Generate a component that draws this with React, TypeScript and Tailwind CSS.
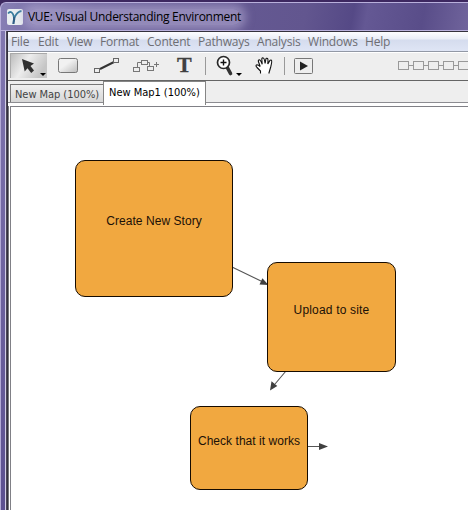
import React from "react";

const menus = [
  { label: "File", cls: "w-[27px]" },
  { label: "Edit", cls: "w-[29px]" },
  { label: "View", cls: "w-[33px]" },
  { label: "Format", cls: "w-[47px]" },
  { label: "Content", cls: "w-[51px]" },
  { label: "Pathways", cls: "w-[59px]" },
  { label: "Analysis", cls: "w-[51px]" },
  { label: "Windows", cls: "w-[57px]" },
  { label: "Help", cls: "w-[30px]" },
];

function TitleBar() {
  return (
    <header className="h-[31px] shrink-0 border-t-2 border-[#3d2860] bg-[#3d2860]">
      <div className="flex h-[29px] items-center overflow-hidden rounded-tl-md border-l border-t border-b border-[#b9b0dc] bg-[linear-gradient(100deg,#8880b5_0%,#695e99_20%,#62568f_65%,#554986_75%,#645894_78%,#594d89_90%,#70649c_100%)] pl-[6px]">
        <svg width="16" height="16" viewBox="0 0 16 16" className="shrink-0">
          <rect width="16" height="16" rx="2" fill="#e9eef1" />
          <path d="M1 4.5C3.5 1.5 6 3 7.2 9C9 5 10.5 2.5 14.5 2" fill="none" stroke="#397c9e" strokeWidth="1.8" />
          <path d="M7.2 8C7.5 11 6.5 12.5 6.4 15" fill="none" stroke="#315f87" strokeWidth="2.2" />
        </svg>
        <span className="ml-[5px] whitespace-nowrap rounded-full bg-[#b1a9d0]/60 font-['Open_Sans',sans-serif] text-[12px] leading-4 tracking-[-0.28px] text-black shadow-[0_0_8px_5px_rgba(177,169,208,0.6)]">
          VUE: Visual Understanding Environment
        </span>
      </div>
    </header>
  );
}

function MenuBar() {
  return (
    <nav className="flex h-5 shrink-0 items-center border-b border-[#9298a5] bg-[linear-gradient(#fdfdff_0px,#e9edf7_7px,#d5dcee_8px,#dfe5f5_19px)] pl-[3px] font-['Open_Sans',sans-serif] text-[12px] leading-4 tracking-[-0.2px] text-[#6e6e73]">
      {menus.map((m) => (
        <span key={m.label} className={"shrink-0 whitespace-nowrap " + m.cls}>{m.label}</span>
      ))}
    </nav>
  );
}

function Toolbar() {
  return (
    <div className="h-[29px] shrink-0 border-b border-[#656565] border-t border-t-white bg-[#eeeeee]">
      <svg width="460" height="27" viewBox="8 53 460 27" className="block">
        <defs>
          <linearGradient id="selected" x1="0" x2="1" y2="0.4">
            <stop stopColor="#b8b8b8" /><stop offset=".5" stopColor="#ededed" /><stop offset="1" stopColor="#c5c5c5" />
          </linearGradient>
          <linearGradient id="shape" x2="1" y2="1">
            <stop offset=".4" stopColor="#f1f1f1" /><stop offset="1" stopColor="#bcbcbc" />
          </linearGradient>
        </defs>
        <rect x="10" y="53" width="37" height="25" fill="url(#selected)" />
        <path d="M10.5 78V53.5H47" fill="none" stroke="#a9a9a9" />
        <path d="M22 59L34 63.5L30.5 66L34 70.5L31.2 73L27.5 68.2L24.7 71.5Z" fill="#303030" />
        <path d="M40 73H46L43 76Z" fill="#000" />
        <rect x="58.5" y="58.5" width="19" height="14" rx="2" fill="url(#shape)" stroke="#777" />
        <path d="M100 69L114 62" stroke="#333" strokeWidth="2" />
        <g fill="#eee" stroke="#666">
          <rect x="94.5" y="68.5" width="5" height="4" /><rect x="113.5" y="58.5" width="5" height="4" />
        </g>
        <g fill="none" stroke="#777">
          <rect x="133.5" y="67.5" width="6" height="4" /><rect x="141.5" y="60.5" width="6" height="4" /><rect x="147.5" y="66.5" width="6" height="4" />
          <path d="M137.5 67V62.5H141M147 62.5H149.5V66M154 64.5H159M156.5 62V67" />
        </g>
        <text x="177" y="72" fontFamily="Liberation Serif, serif" fontSize="22" fontWeight="700" fill="#404040" stroke="#404040" strokeWidth=".3">T</text>
        <path d="M205.5 57V75M284.5 57V75" stroke="#999" />
        <path d="M227 67L230.5 73.5" stroke="#333" strokeWidth="3.6" strokeLinecap="round" />
        <circle cx="223.5" cy="62.5" r="6" fill="#fff" stroke="#292929" strokeWidth="1.7" />
        <path d="M220.5 62.5H226.5M223.5 59.5V65.5" stroke="#111" strokeWidth="1.4" />
        <path d="M236 73H242L239 76Z" fill="#000" />
        <path d="M260.5 73.5V71L257 67.5Q255 65.2 257 64.8Q258.4 64.8 260.2 66.5L258.4 61.5Q258 59.7 259.4 59.7Q260.4 59.8 262.2 64.2L261.8 59Q262 57.5 263.3 58Q264.4 58.3 265.1 63.5L265.9 59Q266.4 57.8 267.6 58.5Q268.2 59 267.8 64L269.8 60.6Q270.6 59.6 271.5 60.3Q272.2 61 270.7 67L268.8 73.5" fill="white" stroke="#111" strokeWidth="1.1" />
        <rect x="294.5" y="58.5" width="18" height="15" rx="1" fill="#eee" stroke="#777" />
        <path d="M300 61.5L308 66L300 70.5Z" fill="#222" />
        <g fill="none" stroke="#999">
          {[398.5, 413.5, 428.5, 443.5, 458.5].map((x) => (
            <g key={x}><rect x={x} y="61.5" width="10" height="8" /><path d={`M${x + 10} 65.5h5`} /></g>
          ))}
        </g>
      </svg>
    </div>
  );
}

function Tabs() {
  return (
    <div className="flex h-[25px] shrink-0 border-b-[3px] border-white bg-[#eeeeee] font-['DejaVu_Sans_Condensed','DejaVu_Sans',sans-serif] text-[11px] leading-[18px]">
      <div className="flex w-[95px] shrink-0 items-end border-b border-[#8c8c91] pl-[2px]">
        <div className="h-[18px] w-[93px] whitespace-nowrap border-l border-t border-[#777] bg-linear-to-b from-[#f0f0f0] to-[#d7d7d7] pl-1 pt-px font-stretch-condensed tracking-[-0.05px] text-[#444]">New Map (100%)</div>
      </div>
      <div className="h-[24px] w-[103px] shrink-0 whitespace-nowrap border-l border-r border-t border-[#858585] bg-white pl-[5px] pt-[2px] font-stretch-condensed tracking-[-0.02px] text-black">New Map1 (100%)</div>
      <div className="flex-1 border-b border-[#8c8c91]" />
    </div>
  );
}

function Node({ label, place }: { label: string; place: string }) {
  return (
    <div className={"absolute flex justify-center rounded-[10px] border border-[#160b00] bg-[#f1a840] font-['Liberation_Sans',sans-serif] text-[12px] leading-4 text-[#1b1007] " + place}>
      <span className="whitespace-nowrap">{label}</span>
    </div>
  );
}

function Canvas() {
  return (
    <main className="relative min-h-0 flex-1 overflow-hidden border-l border-t border-[#808086] bg-white">
      <svg width="457" height="403" viewBox="11 107 457 403" className="absolute left-0 top-0">
        <g stroke="#555" strokeWidth="1.1">
          <path d="M232 267L262 281.5M286 371L275 384M308 446.5H320" />
        </g>
        <g fill="#404040">
          <path d="M268.5 285L259.5 284.5L262.4 278.2ZM270 390.5L271.5 381.3L277.3 386ZM328 446.5L319 443V450Z" />
        </g>
      </svg>
      <Node label="Create New Story" place="left-[64px] top-[53px] h-[137px] w-[158px] pt-[52px] tracking-[0.06px]" />
      <Node label="Upload to site" place="left-[256px] top-[155px] h-[110px] w-[129px] pt-[39px] tracking-[0.18px]" />
      <Node label="Check that it works" place="left-[179px] top-[299px] h-[84px] w-[118px] pt-[26px] tracking-[0.04px]" />
    </main>
  );
}

export default function App() {
  return (
    <div className="flex h-[510px] w-[468px] flex-col overflow-hidden bg-[#635694]">
      <TitleBar />
      <div className="flex min-h-0 flex-1 border-l border-[#b2aad5]">
        <div className="w-1 shrink-0 bg-linear-to-b from-[#8177b0] to-[#5c5090]" />
        <div className="w-px shrink-0 bg-[#d2cee6]" />
        <div className="w-px shrink-0 bg-[#4b4658]" />
        <div className="flex min-w-0 flex-1 flex-col border-l border-t border-[#34313d] bg-white">
          <MenuBar />
          <Toolbar />
          <div className="flex min-h-0 flex-1 flex-col">
            <Tabs />
            <div className="flex min-h-0 flex-1 border-l border-[#77777d] pl-px"><Canvas /></div>
          </div>
        </div>
      </div>
    </div>
  );
}
